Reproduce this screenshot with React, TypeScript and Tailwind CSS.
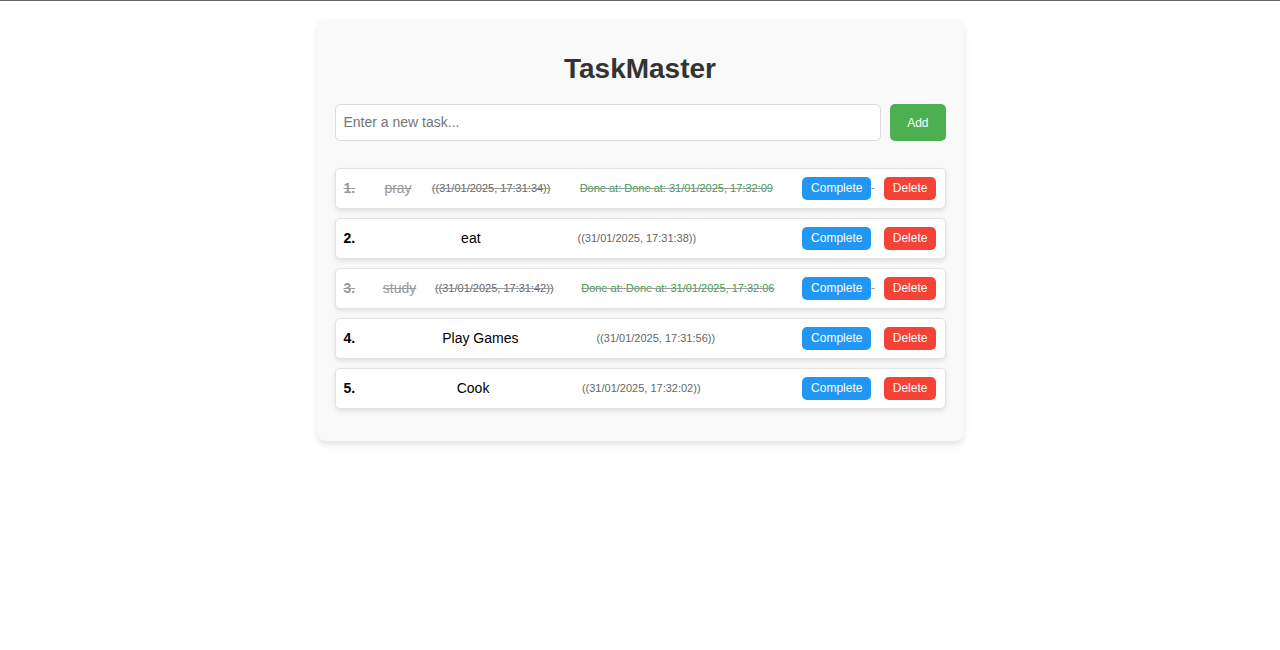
import { useState, type FormEvent } from "react";

type Task = { id: number; text: string; created: string; done?: string };

const initialTasks: Task[] = [
  { id: 1, text: "pray", created: "(31/01/2025, 17:31:34)", done: "Done at: 31/01/2025, 17:32:09" },
  { id: 2, text: "eat", created: "(31/01/2025, 17:31:38)" },
  { id: 3, text: "study", created: "(31/01/2025, 17:31:42)", done: "Done at: 31/01/2025, 17:32:06" },
  { id: 4, text: "Play Games", created: "(31/01/2025, 17:31:56)" },
  { id: 5, text: "Cook", created: "(31/01/2025, 17:32:02)" },
];

function now() {
  return new Date().toLocaleString("en-GB");
}

type RowProps = { task: Task; index: number; onToggle: () => void; onDelete: () => void };

function TaskRow({ task, index, onToggle, onDelete }: RowProps) {
  return (
    <li
      className={`flex items-center justify-between rounded-[5px] border border-[#e2e2e2] bg-white px-2 py-2 shadow-[0_2px_4px_rgba(0,0,0,0.1)] ${
        task.done ? "text-[#999999] line-through" : "text-black"
      }`}
    >
      <strong className="mr-[9px]">{index + 1}.</strong>
      <span>{task.text}</span>
      <span className="text-[11px] text-[#666666]">({task.created})</span>
      {task.done && <span className="ml-[9px] text-[11px] text-[#28a745]">Done at: {task.done}</span>}
      <div className="text-[12px] leading-[23px]">
        <button
          type="button"
          onClick={onToggle}
          className="ml-[9px] cursor-pointer rounded-[5px] bg-[#2196f3] px-[9px] align-top text-white"
        >
          Complete
        </button>{" "}
        <button
          type="button"
          onClick={onDelete}
          className="ml-[9px] cursor-pointer rounded-[5px] bg-[#f44336] px-[9px] align-top text-white"
        >
          Delete
        </button>
      </div>
    </li>
  );
}

export default function App() {
  const [tasks, setTasks] = useState(initialTasks);
  const [text, setText] = useState("");

  function addTask(e: FormEvent) {
    e.preventDefault();
    if (!text.trim()) return;
    setTasks([...tasks, { id: Date.now(), text: text.trim(), created: `(${now()})` }]);
    setText("");
  }

  function toggle(id: number) {
    setTasks(tasks.map((t) => (t.id === id ? { ...t, done: t.done ? undefined : `Done at: ${now()}` } : t)));
  }

  return (
    <div className="min-h-screen border-t border-[#666666] bg-white px-4 pt-[18px] font-['Liberation_Sans',Arial,sans-serif] text-[14px]">
      <main className="mx-auto max-w-[647px] rounded-[9px] bg-[#f9f9f9] px-[18px] pt-[32px] pb-[32px] shadow-[0_4px_6px_rgba(0,0,0,0.1)]">
        <h1 className="text-center text-[28px] leading-9 font-bold text-[#333333]">TaskMaster</h1>
        <form onSubmit={addTask} className="mt-[17px] flex gap-[9px]">
          <input
            type="text"
            aria-label="New task"
            placeholder="Enter a new task..."
            value={text}
            onChange={(e) => setText(e.target.value)}
            className="h-[37px] min-w-0 flex-1 rounded-[5px] border border-[#dddddd] bg-white px-2 pb-[2px] text-[14px] text-black placeholder:text-[#757575]"
          />
          <button type="submit" className="cursor-pointer rounded-[5px] bg-[#4caf50] px-[17px] text-[12px] text-white">
            Add
          </button>
        </form>
        <ul className="mt-[27px] flex flex-col gap-[9px]">
          {tasks.map((task, i) => (
            <TaskRow
              key={task.id}
              task={task}
              index={i}
              onToggle={() => toggle(task.id)}
              onDelete={() => setTasks(tasks.filter((t) => t.id !== task.id))}
            />
          ))}
        </ul>
      </main>
    </div>
  );
}
